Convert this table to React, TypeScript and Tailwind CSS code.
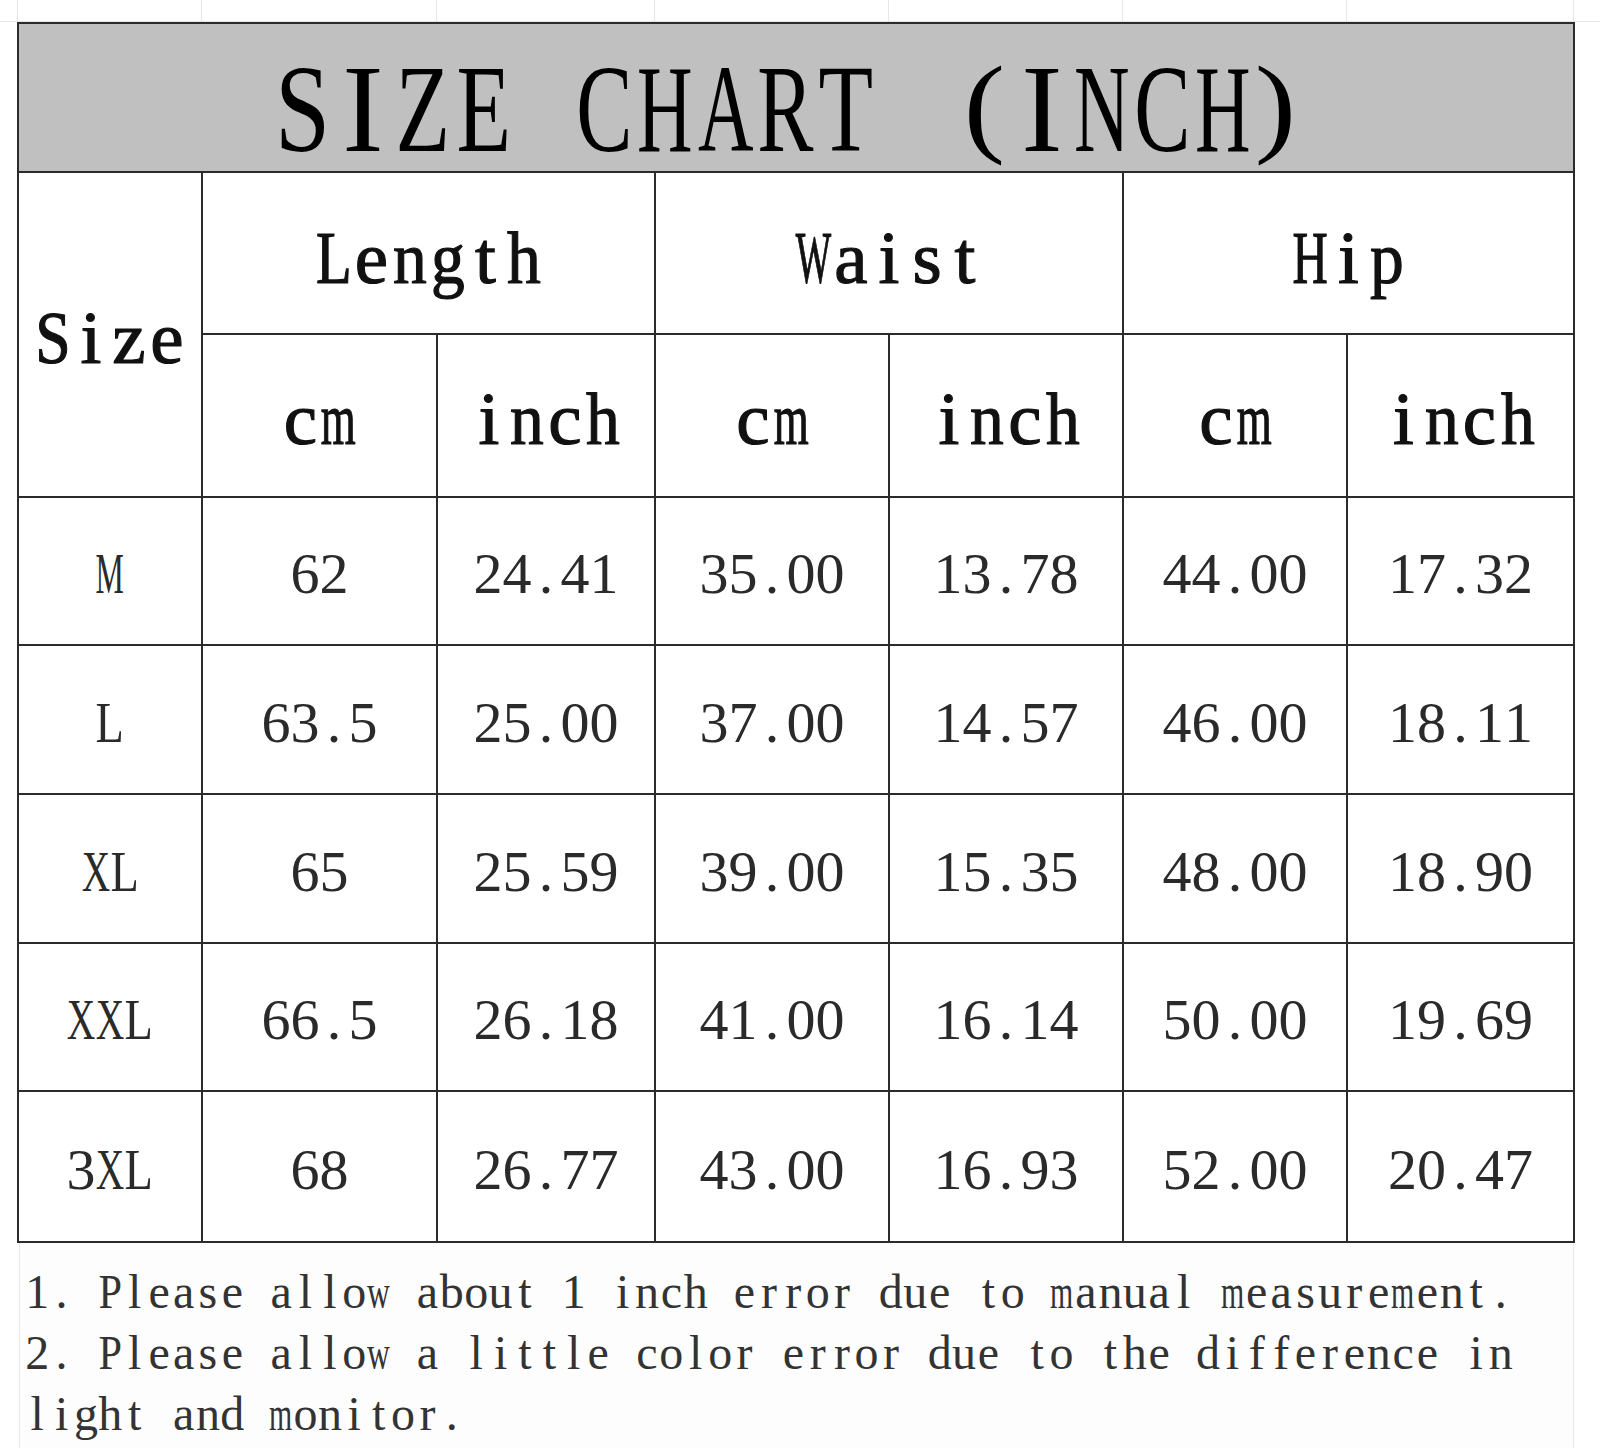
const rows = [
  { size: "M", h: "h-[148px]", v: ["62", "24.41", "35.00", "13.78", "44.00", "17.32"] },
  { size: "L", h: "h-[149px]", v: ["63.5", "25.00", "37.00", "14.57", "46.00", "18.11"] },
  { size: "XL", h: "h-[149px]", v: ["65", "25.59", "39.00", "15.35", "48.00", "18.90"] },
  { size: "XXL", h: "h-[148px]", v: ["66.5", "26.18", "41.00", "16.14", "50.00", "19.69"] },
  { size: "3XL", h: "h-[151px]", v: ["68", "26.77", "43.00", "16.93", "52.00", "20.47"] },
]

// glyph squeezes so the serif letters sit in even, half-width boxes
const titleSq: Record<string, string> = {
  S: "scale-x-[0.8]", Z: "scale-x-[0.72]", E: "scale-x-[0.72]", C: "scale-x-[0.68]",
  H: "scale-x-[0.62]", A: "scale-x-[0.62]", R: "scale-x-[0.68]", T: "scale-x-[0.72]",
  N: "scale-x-[0.62]", "(": "scale-y-[0.88] -translate-y-[4px] translate-x-[3px]", ")": "scale-y-[0.88] -translate-y-[4px] -translate-x-[8px]",
}
const headSq: Record<string, string> = {
  L: "scale-x-[0.78]", n: "scale-x-[0.9]", g: "scale-x-[0.9]", h: "scale-x-[0.9]",
  W: "scale-x-[0.5]", H: "scale-x-[0.65]", p: "scale-x-[0.9]", S: "scale-x-[0.85]",
  m: "scale-x-[0.6]",
}
const numSq: Record<string, string> = {
  M: "scale-x-[0.55]", L: "scale-x-[0.8]", X: "scale-x-[0.68]",
}
const noteSq: Record<string, string> = {
  m: "scale-x-[0.62]", w: "scale-x-[0.66]", P: "scale-x-[0.88]",
}

function Mono({ text, box, sq }: { text: string; box: string; sq: Record<string, string> }) {
  return (
    <span className="inline-flex">
      {text.split("").map((ch, i) => (
        <span key={i} className={`${box} inline-flex justify-center`}>
          <span className={`inline-block whitespace-pre ${sq[ch] ?? ""}`}>{ch}</span>
        </span>
      ))}
    </span>
  )
}

const cell = "border-2 border-[#2b2b2b] text-center align-middle"
const head = "text-[75px] leading-[75px] text-[#111] [-webkit-text-stroke:1.2px_#111]"
const num = "text-[58px] leading-[58px] text-[#2a2a2a] pt-[6px]"

function Head({ text }: { text: string }) {
  return <Mono text={text} box="w-[38px]" sq={headSq} />
}

export default function App() {
  return (
    <div className="w-[1600px] h-[1448px] bg-white overflow-hidden font-['Liberation_Serif',serif]">
      {/* faint sheet gridlines above the table */}
      <div className="flex h-[22px] border-b border-[#e6e6e6]">
        <div className="w-[18px] border-r border-[#e6e6e6]" />
        <div className="w-[184px] border-r border-[#e6e6e6]" />
        <div className="w-[235px] border-r border-[#e6e6e6]" />
        <div className="w-[218px] border-r border-[#e6e6e6]" />
        <div className="w-[234px] border-r border-[#e6e6e6]" />
        <div className="w-[234px] border-r border-[#e6e6e6]" />
        <div className="w-[224px] border-r border-[#e6e6e6]" />
        <div className="w-[227px] border-r border-[#e6e6e6]" />
      </div>

      <table className="ml-[17px] w-[1558px] table-fixed border-collapse">
        <colgroup>
          <col className="w-[184px]" />
          <col className="w-[235px]" />
          <col className="w-[218px]" />
          <col className="w-[234px]" />
          <col className="w-[234px]" />
          <col className="w-[224px]" />
          <col className="w-[227px]" />
        </colgroup>
        <tbody>
          <tr className="h-[149px]">
            <td colSpan={7} className={`${cell} bg-[#c0c0c0] pt-[24px] pr-[6px]`}>
              <span className="inline-flex text-[124px] leading-[100px] text-black whitespace-nowrap">
                <Mono text="SIZE CHART" box="w-[60.4px]" sq={titleSq} />
                <span className="w-[75px] whitespace-pre"> </span>
                <Mono text="(INCH)" box="w-[60.4px]" sq={titleSq} />
              </span>
            </td>
          </tr>
          <tr className="h-[162px]">
            <td rowSpan={2} className={`${cell} ${head} pt-[6px]`}><Head text="Size" /></td>
            <td colSpan={2} className={`${cell} ${head} pt-[8px]`}><Head text="Length" /></td>
            <td colSpan={2} className={`${cell} ${head} pt-[8px]`}><Head text="Waist" /></td>
            <td colSpan={2} className={`${cell} ${head} pt-[8px]`}><Head text="Hip" /></td>
          </tr>
          <tr className="h-[163px]">
            {["cm", "inch", "cm", "inch", "cm", "inch"].map((t, i) => (
              <td key={i} className={`${cell} ${head} pt-[6px]`}><Head text={t} /></td>
            ))}
          </tr>
          {rows.map((r) => (
            <tr key={r.size} className={r.h}>
              <td className={`${cell} ${num}`}><Mono text={r.size} box="w-[29px]" sq={numSq} /></td>
              {r.v.map((v, i) => (
                <td key={i} className={`${cell} ${num}`}><Mono text={v} box="w-[29px]" sq={numSq} /></td>
              ))}
            </tr>
          ))}
        </tbody>
      </table>

      {/* notes */}
      <div className="ml-[19px] w-[1555px] h-[220px] border-x border-[#e8e8e8] bg-[#fdfdfd] pl-[5px] pt-[18px] text-[48px] leading-[61px] text-[#333] whitespace-nowrap">
        <div><Mono text="1. Please allow about 1 inch error due to manual measurement." box="w-[24.4px]" sq={noteSq} /></div>
        <div><Mono text="2. Please allow a little color error due to the difference in" box="w-[24.4px]" sq={noteSq} /></div>
        <div><Mono text="light and monitor." box="w-[24.4px]" sq={noteSq} /></div>
      </div>
    </div>
  )
}
